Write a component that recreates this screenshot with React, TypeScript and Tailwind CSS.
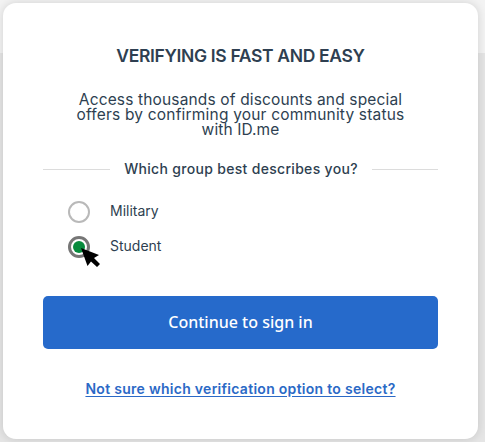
import { useState } from "react";

const groups = ["Military", "Student"];

export default function VerifyCard() {
  const [selected, setSelected] = useState("Student");

  return (
    <div className="h-[442px] w-[485px] overflow-hidden bg-[linear-gradient(#f3f3f3_53px,#e5e5e5_53px)] p-[3px] font-['Inter',sans-serif] text-[#2e3f51]">
      <main className="flex h-[436px] w-[475px] flex-col rounded-[13px] bg-white px-10 shadow-[0_0_10px_rgba(0,0,0,0.14)]">
        <h1 className="mt-[41px] text-center text-[17.5px] leading-6 font-semibold tracking-[-0.34px] whitespace-nowrap">
          VERIFYING IS FAST AND EASY
        </h1>

        <p className="mt-6 text-center text-[15.5px] leading-[15px] font-normal whitespace-nowrap">
          <span className="block tracking-[0.15px]">Access thousands of discounts and special</span>
          <span className="block tracking-[0.19px]">offers by confirming your community status</span>
          <span className="block tracking-[0.1px]">with ID.me</span>
        </p>

        {/* Divider with question */}
        <div className="mt-[22px] flex h-5 items-center">
          <span className="h-px w-[67px] bg-[#dcdcdc]" />
          <h2 className="flex-1 text-center text-[14px] leading-5 font-medium tracking-[0.31px] whitespace-nowrap">
            Which group best describes you?
          </h2>
          <span className="h-px w-[66px] bg-[#dcdcdc]" />
        </div>

        {/* Groups */}
        <div className="mt-[22px] flex flex-col gap-[13px] pl-[25px]">
          {groups.map((group) => (
            <label key={group} className="relative flex h-[22px] items-center gap-5 text-[14px]">
              <input
                type="radio"
                name="group"
                className="sr-only"
                checked={selected === group}
                onChange={() => setSelected(group)}
              />
              <span
                className={
                  selected === group
                    ? "flex size-[22px] items-center justify-center rounded-full border-[3px] border-[#767676]"
                    : "flex size-[22px] items-center justify-center rounded-full border-2 border-[#b9b9b9]"
                }
              >
                {selected === group && <span className="size-3 rounded-full bg-[#078b3d]" />}
              </span>
              <span className="pb-[3px]">{group}</span>
              {group === "Student" && (
                <svg className="absolute top-[11px] left-[12px]" width="21" height="22" viewBox="0 0 21 22">
                  <path d="M1 1 19 8 14 11 20 17 17 20 11 14.5 7.5 19Z" fill="#000" />
                </svg>
              )}
            </label>
          ))}
        </div>

        <button className="mt-[38px] h-[53px] w-full shrink-0 rounded-[5px] bg-[#266acb] pb-0.5 font-['Noto_Sans',sans-serif] text-[16px] font-medium text-white">
          Continue to sign in
        </button>

        <a
          href="#help"
          className="mt-[30px] self-center text-[14px] leading-5 font-semibold tracking-[0.28px] whitespace-nowrap text-[#2b69c6] underline underline-offset-2"
        >
          Not sure which verification option to select?
        </a>
      </main>
    </div>
  );
}
